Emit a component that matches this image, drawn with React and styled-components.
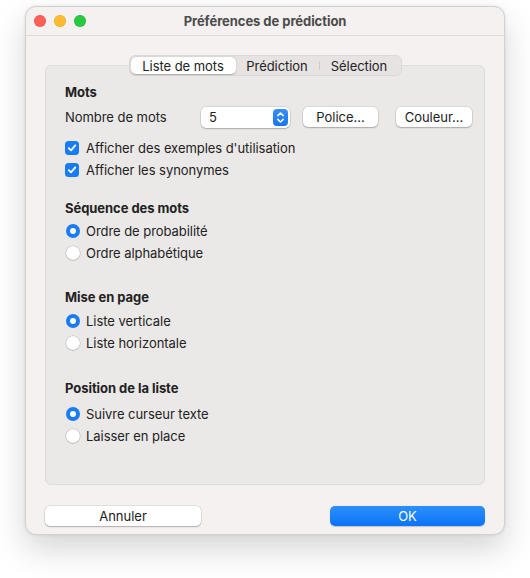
import React from "react";
import styled, { createGlobalStyle } from "styled-components";

const GlobalStyle = createGlobalStyle`
  html, body {
    margin: 0;
    padding: 0;
    background: #ffffff;
  }
  body {
    font-family: Inter, "Noto Sans", "Liberation Sans", sans-serif;
    font-size: 13px;
    letter-spacing: -0.05px;
    color: #222222;
  }
`;

const Page = styled.div`
  min-height: 100vh;
  box-sizing: border-box;
  padding: 6px 25px 40px;
`;

const Window = styled.div`
  width: 480px;
  box-sizing: border-box;
  background: #f4f1f0;
  border: 1px solid #d3d1d0;
  border-radius: 11px;
  box-shadow: 0 14px 32px rgba(0, 0, 0, 0.17), 0 0 3px rgba(0, 0, 0, 0.1);
  overflow: hidden;
`;

const TitleBar = styled.div`
  position: relative;
  height: 28px;
  display: flex;
  align-items: center;
  justify-content: center;
  border-bottom: 1px solid #dddbda;
`;

const Lights = styled.div`
  position: absolute;
  left: 8px;
  top: 8px;
  display: flex;
  gap: 8px;
`;

const Light = styled.span`
  width: 12px;
  height: 12px;
  border-radius: 50%;
  background: ${(p) => p.$color};
  box-shadow: inset 0 0 0 0.5px rgba(0, 0, 0, 0.12);
`;

const Title = styled.div`
  font-weight: 700;
  font-size: 13px;
  color: #4b4b4b;
`;

const Body = styled.div`
  padding: 19px 19px 8px;
`;

const TabRow = styled.div`
  display: flex;
  justify-content: center;
  margin-bottom: -11px;
  position: relative;
  z-index: 1;
`;

const Segmented = styled.div`
  display: flex;
  height: 21px;
  box-sizing: border-box;
  padding: 1px;
  background: #e6e3e2;
  border: 1px solid #dbd8d7;
  border-radius: 6px;
`;

const Segment = styled.div`
  position: relative;
  width: ${(p) => p.$w}px;
  display: flex;
  align-items: center;
  justify-content: center;
  border-radius: 5px;
  color: #222;
  background: ${(p) => (p.$active ? "#ffffff" : "transparent")};
  box-shadow: ${(p) =>
    p.$active ? "0 0.5px 1.5px rgba(0,0,0,0.25)" : "none"};
  ${(p) =>
    p.$sep &&
    `&::before {
      content: "";
      position: absolute;
      left: 0;
      top: 4px;
      bottom: 4px;
      width: 1px;
      background: #cfcccb;
    }`}
`;

const Box = styled.div`
  height: 420px;
  box-sizing: border-box;
  background: #ebe9e8;
  border: 1px solid #dedbda;
  border-radius: 6px;
  padding: 18px 19px 0;
`;

const Section = styled.div`
  margin-top: ${(p) => p.$mt || 0}px;
`;

const Heading = styled.div`
  font-weight: 700;
  line-height: 16px;
  margin-bottom: ${(p) => p.$mb || 5}px;
  color: #222;
`;

const Row = styled.div`
  display: flex;
  align-items: center;
  height: 22px;
`;

const ControlRow = styled(Row)`
  margin-top: 6px;
  margin-bottom: 9px;
  & > * {
    flex-shrink: 0;
  }
`;

const FieldLabel = styled.span`
  width: 136px;
`;

const Stepper = styled.div`
  width: 89px;
  height: 21px;
  box-sizing: border-box;
  background: #fff;
  border-radius: 5px;
  box-shadow: 0 0 0 0.5px rgba(0, 0, 0, 0.15), 0 1px 1.5px rgba(0, 0, 0, 0.2);
  display: flex;
  align-items: center;
  justify-content: space-between;
  padding: 0 2px 0 8px;
`;

const StepBtn = styled.div`
  width: 15px;
  height: 17px;
  border-radius: 4px;
  background: linear-gradient(#3b8ff8, #1677f2);
  display: flex;
  align-items: center;
  justify-content: center;
`;

const PushButton = styled.button`
  font: inherit;
  height: 20px;
  width: ${(p) => p.$w}px;
  margin-left: ${(p) => p.$ml || 0}px;
  padding: 0;
  border: none;
  border-radius: 5px;
  background: ${(p) =>
    p.$primary ? "linear-gradient(#2d8ffb, #0a74f7)" : "#ffffff"};
  color: ${(p) => (p.$primary ? "#ffffff" : "#222")};
  box-shadow: ${(p) =>
    p.$primary
      ? "0 0.5px 1px rgba(0,0,0,0.2)"
      : "0 0 0 0.5px rgba(0,0,0,0.14), 0 1px 1.5px rgba(0,0,0,0.22)"};
`;

const Check = styled.span`
  width: 14px;
  height: 14px;
  border-radius: 3.5px;
  background: #1a7cf5;
  display: flex;
  align-items: center;
  justify-content: center;
  margin-right: 7px;
`;

const Radio = styled.span`
  width: 14px;
  height: 14px;
  box-sizing: border-box;
  border-radius: 50%;
  margin-left: 1px;
  margin-right: 6px;
  background: ${(p) => (p.$on ? "#1a7cf5" : "#ffffff")};
  box-shadow: ${(p) =>
    p.$on
      ? "none"
      : "0 0 0 0.5px rgba(0,0,0,0.2), 0 0.5px 1px rgba(0,0,0,0.2)"};
  display: flex;
  align-items: center;
  justify-content: center;
  &::after {
    content: "";
    width: 6px;
    height: 6px;
    border-radius: 50%;
    background: #fff;
    display: ${(p) => (p.$on ? "block" : "none")};
  }
`;

const Footer = styled.div`
  display: flex;
  justify-content: space-between;
  margin-top: 21px;
`;

function CheckRow({ label }) {
  return (
    <Row>
      <Check>
        <svg width="10" height="10" viewBox="0 0 10 10">
          <path
            d="M1.8 5.2 L4 7.4 L8.3 2.4"
            fill="none"
            stroke="#fff"
            strokeWidth="1.8"
            strokeLinecap="round"
            strokeLinejoin="round"
          />
        </svg>
      </Check>
      {label}
    </Row>
  );
}

function RadioRow({ label, on }) {
  return (
    <Row>
      <Radio $on={on} />
      {label}
    </Row>
  );
}

export default function App() {
  return (
    <>
      <GlobalStyle />
      <Page>
        <Window>
          <TitleBar>
            <Lights>
              <Light $color="#ff5f57" />
              <Light $color="#febc2e" />
              <Light $color="#28c840" />
            </Lights>
            <Title>Préférences de prédiction</Title>
          </TitleBar>
          <Body>
            <TabRow>
              <Segmented>
                <Segment $w={105} $active>
                  Liste de mots
                </Segment>
                <Segment $w={83}>Prédiction</Segment>
                <Segment $w={81} $sep>
                  Sélection
                </Segment>
              </Segmented>
            </TabRow>
            <Box>
              <Section>
                <Heading $mb={0}>Mots</Heading>
                <ControlRow>
                  <FieldLabel>Nombre de mots</FieldLabel>
                  <Stepper>
                    <span>5</span>
                    <StepBtn>
                      <svg width="9" height="13" viewBox="0 0 9 13">
                        <path
                          d="M1.8 4.6 L4.5 2 L7.2 4.6 M1.8 8.4 L4.5 11 L7.2 8.4"
                          fill="none"
                          stroke="#fff"
                          strokeWidth="1.5"
                          strokeLinecap="round"
                          strokeLinejoin="round"
                        />
                      </svg>
                    </StepBtn>
                  </Stepper>
                  <PushButton $w={75} $ml={13}>
                    Police...
                  </PushButton>
                  <PushButton $w={76} $ml={18}>
                    Couleur...
                  </PushButton>
                </ControlRow>
                <CheckRow label="Afficher des exemples d'utilisation" />
                <CheckRow label="Afficher les synonymes" />
              </Section>
              <Section $mt={19}>
                <Heading $mb={4}>Séquence des mots</Heading>
                <RadioRow on label="Ordre de probabilité" />
                <RadioRow label="Ordre alphabétique" />
              </Section>
              <Section $mt={25}>
                <Heading $mb={5}>Mise en page</Heading>
                <RadioRow on label="Liste verticale" />
                <RadioRow label="Liste horizontale" />
              </Section>
              <Section $mt={26}>
                <Heading $mb={7}>Position de la liste</Heading>
                <RadioRow on label="Suivre curseur texte" />
                <RadioRow label="Laisser en place" />
              </Section>
            </Box>
            <Footer>
              <PushButton $w={156}>Annuler</PushButton>
              <PushButton $w={155} $primary>
                OK
              </PushButton>
            </Footer>
          </Body>
        </Window>
      </Page>
    </>
  );
}
